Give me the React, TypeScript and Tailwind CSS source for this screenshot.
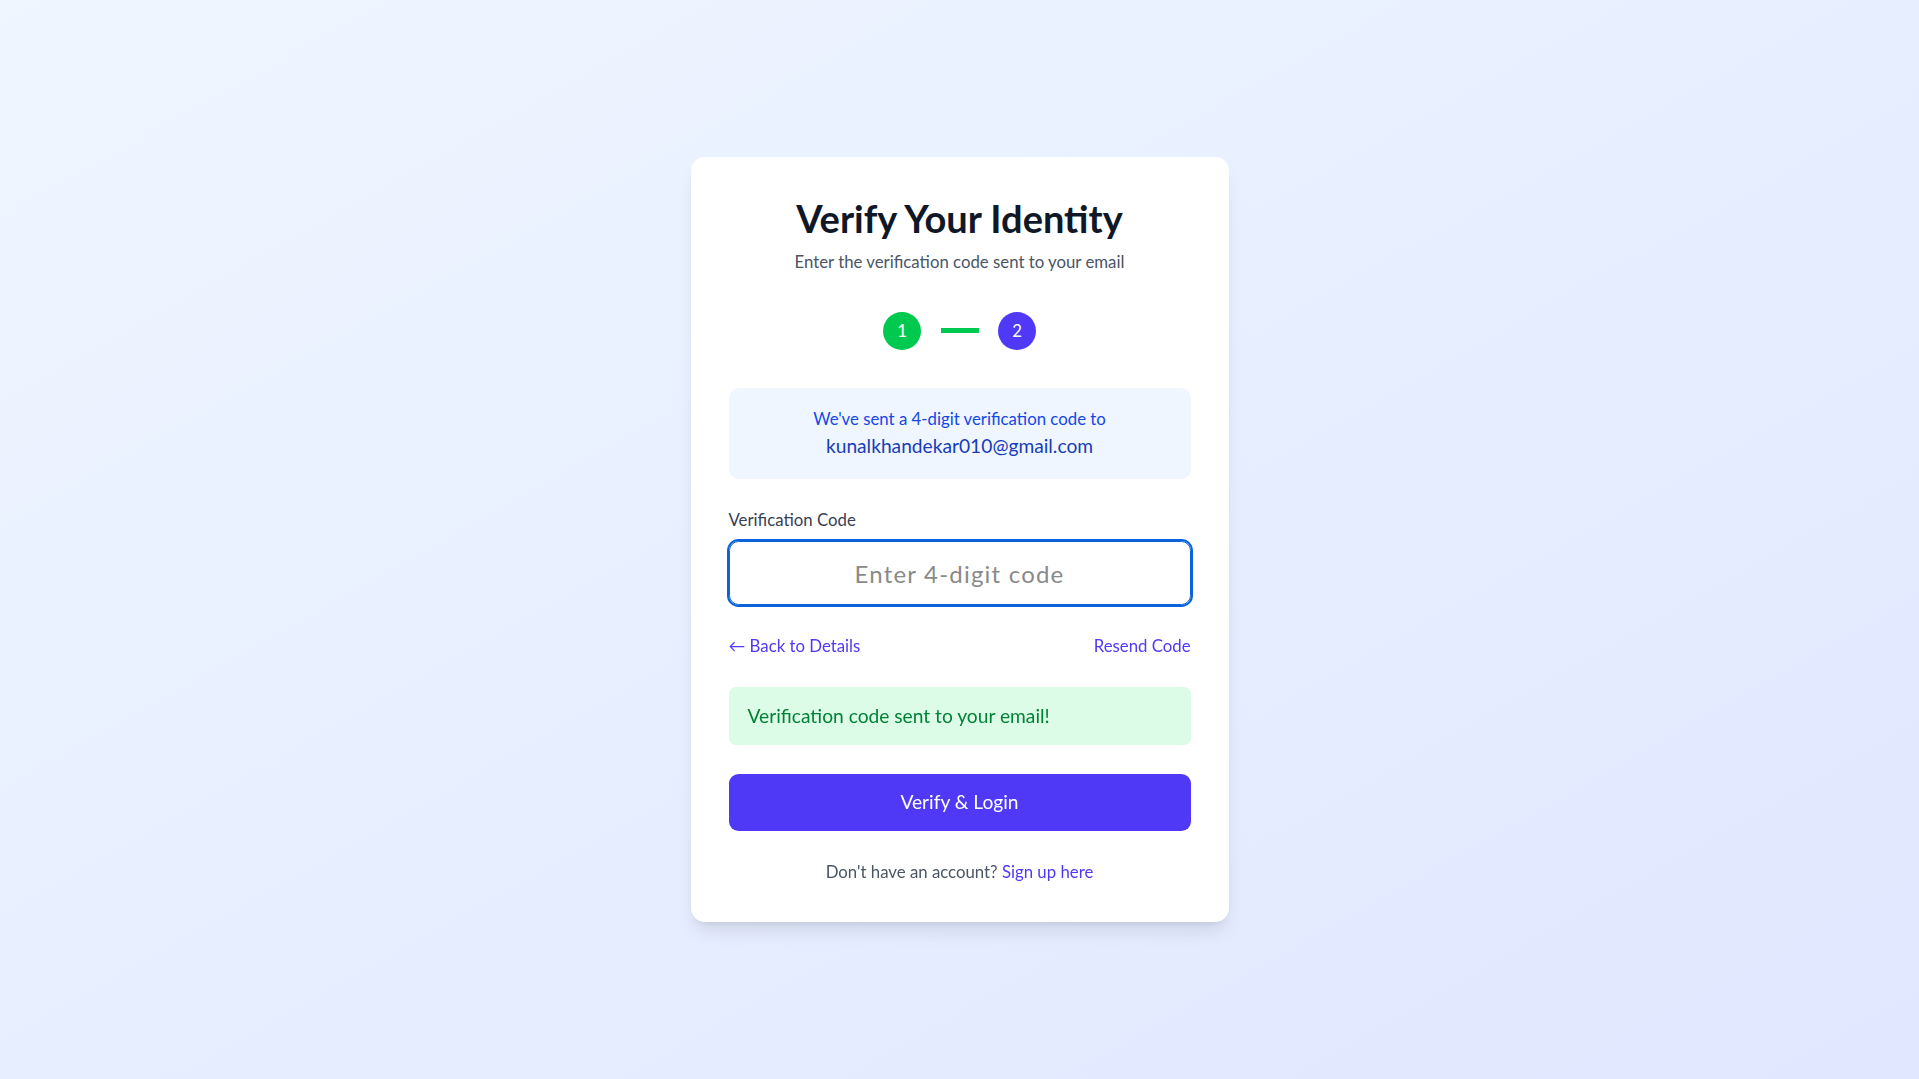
import { useState } from "react";

// Two-step verification screen (step 2: enter code)
export default function App() {
  const [code, setCode] = useState("");

  return (
    <div
      className="min-h-screen w-full flex items-center justify-center bg-gradient-to-br from-[#eff6ff] to-[#e0e7ff]"
      style={{ fontFamily: '"Lato", "Noto Sans", sans-serif' }}
    >
      <div className="w-[538px] bg-white rounded-[14px] p-[38px] shadow-[0_12px_18px_-4px_rgba(0,0,0,0.1),0_5px_7px_-5px_rgba(0,0,0,0.1)]">
        {/* Header */}
        <h1 className="text-center text-[38px] leading-[46px] font-bold text-[#101828]">
          Verify Your Identity
        </h1>
        <p className="mt-[9px] text-center text-[16.8px] leading-[24px] text-[#4a5565]">
          Enter the verification code sent to your email
        </p>

        {/* Step indicator */}
        <div className="mt-[38px] flex items-center justify-center">
          <div className="w-[38px] h-[38px] rounded-full bg-[#00c950] text-white text-[16.8px] flex items-center justify-center">
            1
          </div>
          <div className="w-[38px] h-[4.8px] bg-[#00c950] mx-[19.5px]" />
          <div className="w-[38px] h-[38px] rounded-full bg-[#4f39f6] text-white text-[16.8px] flex items-center justify-center">
            2
          </div>
        </div>

        {/* Info box */}
        <div className="mt-[38px] bg-[#eff6ff] rounded-[10px] py-[19px] px-[19px] text-center">
          <div className="text-[16.8px] leading-[24px] text-[#1447e6]">
            We've sent a 4-digit verification code to
          </div>
          <div className="text-[19.2px] leading-[29px] text-[#193cb8]">
            kunalkhandekar010@gmail.com
          </div>
        </div>

        {/* Code input */}
        <div className="mt-[29px]">
          <label className="block text-[16.8px] leading-[24px] text-[#364153] mb-[9.6px]">
            Verification Code
          </label>
          <input
            autoFocus
            value={code}
            onChange={e => setCode(e.target.value.replace(/\D/g, "").slice(0, 4))}
            placeholder="Enter 4-digit code"
            className="w-full h-[64px] rounded-[9.6px] border border-[#0b63dc] outline-2 outline-solid outline-[#0b63dc] text-center text-[24px] tracking-[0.05em] text-[#101828] placeholder:text-[#8a8a8a] bg-white"
          />
        </div>

        {/* Links */}
        <div className="mt-[29px] flex items-center justify-between text-[16.8px] leading-[24px] text-[#4f39f6]">
          <button className="hover:underline">← Back to Details</button>
          <button className="hover:underline">Resend Code</button>
        </div>

        {/* Success message */}
        <div className="mt-[29px] bg-[#dcfce7] text-[#008236] rounded-[7px] px-[19px] py-[14.4px] text-[19.2px] leading-[28.8px]">
          Verification code sent to your email!
        </div>

        {/* Submit */}
        <button className="mt-[29px] w-full h-[57.6px] rounded-[9.6px] bg-[#4f39f6] hover:bg-[#432dd7] text-white text-[19.2px]">
          Verify &amp; Login
        </button>

        {/* Footer */}
        <p className="mt-[29px] text-center text-[16.8px] leading-[24px] text-[#4a5565]">
          Don't have an account?{" "}
          <a href="#" className="text-[#4f39f6] hover:underline">Sign up here</a>
        </p>
      </div>
    </div>
  );
}
